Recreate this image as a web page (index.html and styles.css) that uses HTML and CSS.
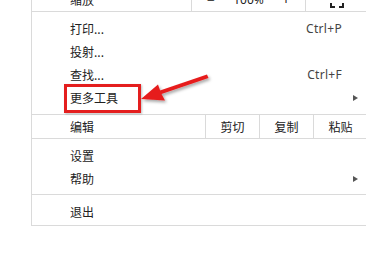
FILE: index.html
```html
<!DOCTYPE html>
<html>
<head>
<meta charset="utf-8">
<link rel="stylesheet" href="styles.css">
</head>
<body>
<div class="page">
  <div class="menu">
    <div class="zoom-row">
      <span class="label">缩放</span>
      <div class="zoom-ctrl"><span class="zbtn">−</span><span class="zval">100%</span><span class="zbtn">+</span></div>
      <div class="fullscreen">
        <svg width="14" height="14" viewBox="0 0 14 14"><path d="M1 5V1H5M9 1H13V5M13 9V13H9M5 13H1V9" fill="none" stroke="#222" stroke-width="2"/></svg>
      </div>
    </div>
    <div class="section top">
      <div class="item"><span class="label">打印...</span><span class="key">Ctrl+P</span><span class="slot"></span></div>
      <div class="item"><span class="label">投射...</span><span class="key"></span><span class="slot"></span></div>
      <div class="item"><span class="label">查找...</span><span class="key">Ctrl+F</span><span class="slot"></span></div>
      <div class="item"><span class="label">更多工具</span><span class="key"></span><span class="slot"><span class="tri"></span></span></div>
    </div>
    <div class="edit-row">
      <span class="label">编辑</span>
      <span class="ecell">剪切</span><span class="ecell">复制</span><span class="ecell">粘贴</span>
    </div>
    <div class="section mid">
      <div class="item"><span class="label">设置</span><span class="key"></span><span class="slot"></span></div>
      <div class="item"><span class="label">帮助</span><span class="key"></span><span class="slot"><span class="tri"></span></span></div>
    </div>
    <div class="section last">
      <div class="item"><span class="label">退出</span><span class="key"></span><span class="slot"></span></div>
    </div>
  </div>
  <div class="highlight"></div>
  <svg class="arrow" width="366" height="257" viewBox="0 0 366 257">
    <defs>
      <filter id="sh" x="-20%" y="-20%" width="140%" height="160%">
        <feDropShadow dx="1.5" dy="2" stdDeviation="1.5" flood-color="#000" flood-opacity="0.35"/>
      </filter>
    </defs>
    <g filter="url(#sh)" fill="#e61e1e" stroke="none">
      <path d="M207 74.5 L208.5 78 L160 94.5 L158.5 91 Z"/>
      <path d="M141 99 L158 84.5 L161 93 L165 100.5 Z"/>
    </g>
  </svg>
</div>
</body>
</html>
```
FILE: styles.css
```css
html, body {
  margin: 0;
  padding: 0;
  background: #fff;
}
body {
  width: 366px;
  height: 257px;
  overflow: hidden;
  font-family: "Noto Sans CJK SC", "Noto Sans", sans-serif;
  font-size: 12px;
  color: #222;
}
.page {
  position: relative;
  display: flow-root;
  width: 366px;
  height: 257px;
}
.menu {
  margin-left: 31px;
  margin-top: -12px;
  width: 340px;
  box-sizing: border-box;
  border: 1px solid #dadada;
  border-top: none;
  background: #fff;
}
.label {
  padding-left: 38px;
  white-space: nowrap;
}
.zoom-row {
  display: flex;
  align-items: center;
  height: 23px;
  border-bottom: 1px solid #dadada;
}
.zoom-row .label {
  width: 159px;
  box-sizing: border-box;
}
.zoom-ctrl {
  width: 114px;
  box-sizing: border-box;
  height: 100%;
  border-left: 1px solid #dadada;
  display: flex;
  align-items: center;
  justify-content: space-between;
  padding: 0 15px 0 15px;
  font-family: "Noto Sans", sans-serif;
}
.zval { font-size: 12px; }
.zbtn { font-size: 14px; }
.fullscreen {
  flex: 1;
  height: 100%;
  border-left: 1px solid #dadada;
  display: flex;
  align-items: center;
  padding-left: 24px;
}
.fullscreen svg { margin-top: 2px; }
.section {
  border-bottom: 1px solid #dadada;
  padding: 5px 0;
}
.section.last {
  border-bottom: none;
  padding: 5px 0 2px;
}
.section.mid {
  padding: 5px 0 4px;
}
.item {
  display: flex;
  align-items: center;
  height: 23px;
}
.item .label { flex: 1; }
.key {
  font-family: "Noto Sans", sans-serif;
  font-size: 12px;
  color: #444;
  letter-spacing: 0.3px;
}
.slot {
  width: 28px;
  flex: none;
  display: flex;
  align-items: center;
  padding-left: 11px;
  box-sizing: border-box;
}
.tri {
  width: 0;
  height: 0;
  border-top: 3.5px solid transparent;
  border-bottom: 3.5px solid transparent;
  border-left: 5px solid #555;
}
.edit-row {
  display: flex;
  align-items: center;
  height: 23px;
  border-bottom: 1px solid #dadada;
}
.edit-row .label {
  width: 173px;
  box-sizing: border-box;
}
.ecell {
  width: 54px;
  height: 100%;
  box-sizing: border-box;
  border-left: 1px solid #dadada;
  display: flex;
  align-items: center;
  justify-content: center;
}
.highlight {
  position: absolute;
  left: 64px;
  top: 84px;
  width: 77px;
  height: 29px;
  box-sizing: border-box;
  border: 3px solid #e41e1e;
  box-shadow: 1px 1px 2px rgba(0,0,0,0.25);
}
.arrow {
  position: absolute;
  left: 0;
  top: 0;
}
```
